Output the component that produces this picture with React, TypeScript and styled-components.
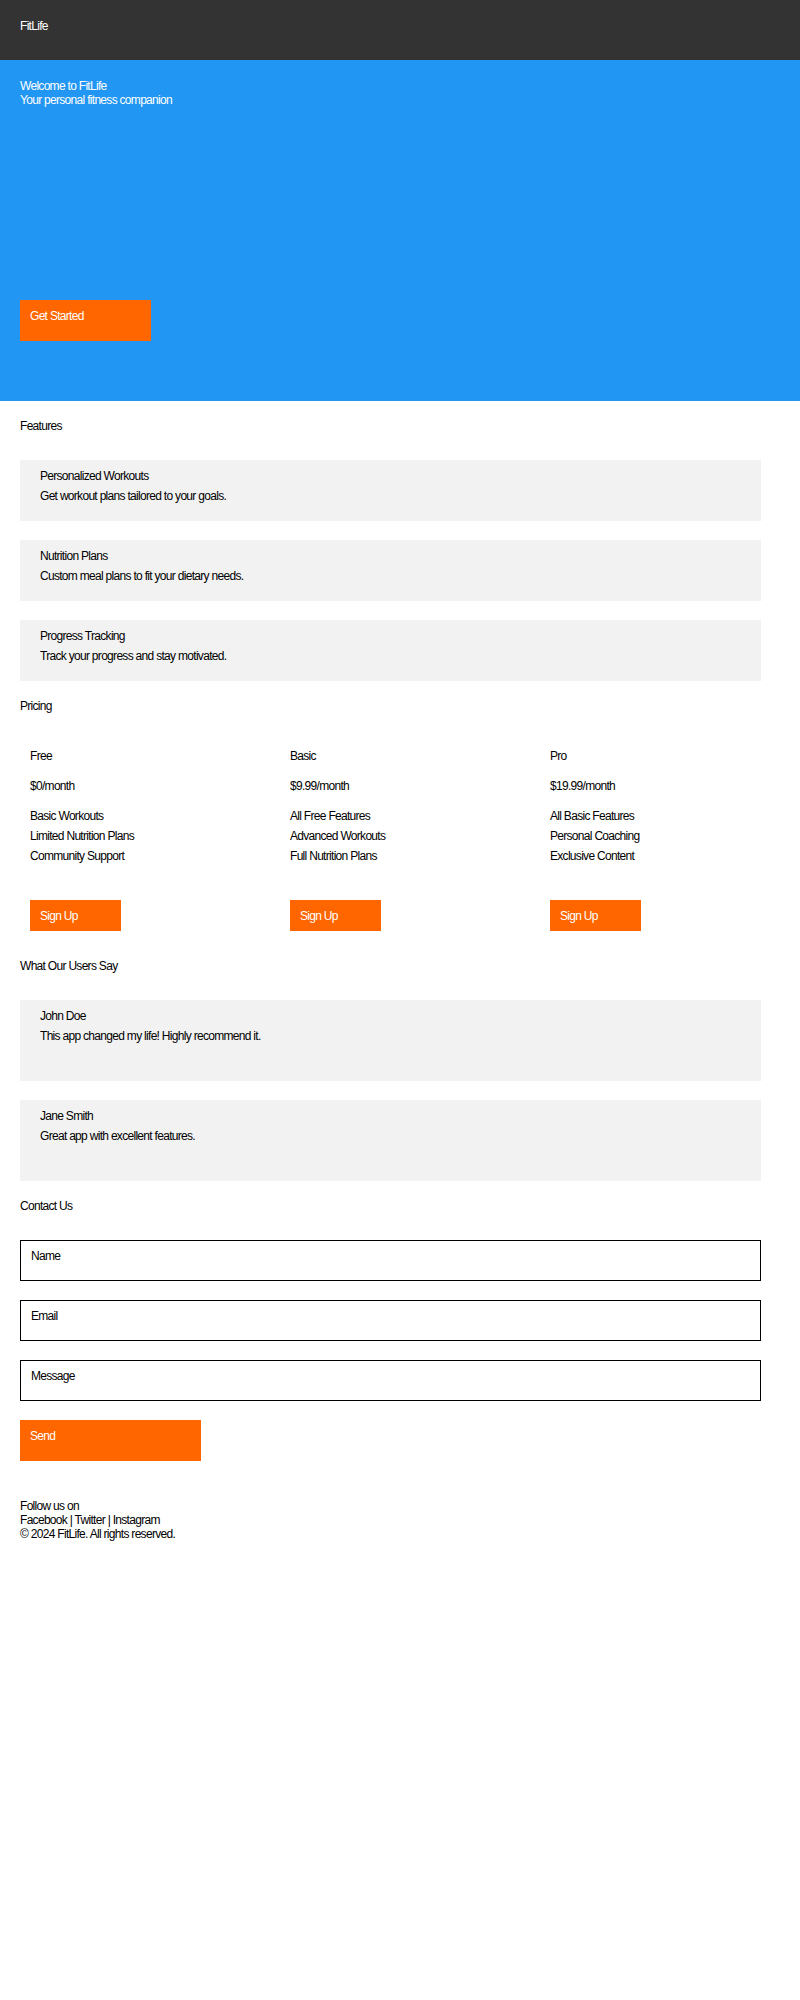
import React from 'react';
import styled, { createGlobalStyle } from 'styled-components';

const GlobalStyle = createGlobalStyle`
  body {
    margin: 0;
    background: #ffffff;
    color: #000000;
    font-family: "Liberation Sans", Arial, sans-serif;
    font-size: 12px;
    letter-spacing: -0.7px;
  }
`;

const ORANGE = '#ff6600';

const Header = styled.header`
  height: 60px;
  box-sizing: border-box;
  padding: 19px 20px 0;
  background: #333333;
  color: #ffffff;
  line-height: 14px;
`;

const Hero = styled.section`
  display: flex;
  flex-direction: column;
  align-items: flex-start;
  padding: 19px 20px 60px;
  background: #2196f3;
  color: #ffffff;
  line-height: 14px;
`;

const HeroTitle = styled.h1`
  margin: 0;
  font-size: 12px;
  font-weight: normal;
`;

const HeroText = styled.p`
  margin: 0 0 193px;
`;

// text sits at the top-left; height comes from the bottom padding
const Button = styled.button<{ $w: number; $pb: number }>`
  display: block;
  width: ${(p) => p.$w}px;
  box-sizing: border-box;
  margin: 0;
  padding: 6px 10px ${(p) => p.$pb}px;
  border: none;
  border-radius: 0;
  background: ${ORANGE};
  color: #ffffff;
  font: inherit;
  letter-spacing: inherit;
  line-height: 20px;
  text-align: left;
`;

const Section = styled.section`
  padding: 15px 20px 0;
`;

const SectionTitle = styled.h2`
  margin: 0 0 24px;
  font-size: 12px;
  font-weight: normal;
  line-height: 20px;
`;

const Stack = styled.div`
  display: flex;
  flex-direction: column;
  gap: 19px;
`;

const Card = styled.div<{ $bottom: number }>`
  width: 741px;
  box-sizing: border-box;
  padding: 6px 20px ${(p) => p.$bottom}px;
  background: #f2f2f2;
  line-height: 20px;
`;

const CardTitle = styled.h3`
  margin: 0;
  font-size: 12px;
  font-weight: normal;
`;

const CardText = styled.p`
  margin: 0;
`;

const PlanGrid = styled.div`
  display: grid;
  grid-template-columns: repeat(3, 240px);
  column-gap: 20px;
`;

const Plan = styled.div`
  padding: 6px 10px 10px;
  line-height: 20px;
`;

const PlanName = styled.h3`
  margin: 0;
  font-size: 12px;
  font-weight: normal;
`;

const Price = styled.p`
  margin: 10px 0 0;
`;

const PlanList = styled.ul`
  margin: 10px 0 34px;
  padding: 0;
  list-style: none;
`;

const Form = styled.form`
  display: flex;
  flex-direction: column;
  align-items: flex-start;
  gap: 19px;
`;

const Field = styled.input`
  width: 741px;
  height: 41px;
  box-sizing: border-box;
  margin: 0;
  padding: 5px 10px 15px;
  border: 1px solid #000000;
  border-radius: 0;
  background: #ffffff;
  font: inherit;
  letter-spacing: inherit;
  line-height: 19px;
  outline: none;

  &::placeholder {
    color: #000000;
    opacity: 1;
  }
`;

const Footer = styled.footer`
  padding: 38px 20px 20px;
  line-height: 14px;
`;

const FooterLine = styled.p`
  margin: 0;
`;

const features = [
  ['Personalized Workouts', 'Get workout plans tailored to your goals.'],
  ['Nutrition Plans', 'Custom meal plans to fit your dietary needs.'],
  ['Progress Tracking', 'Track your progress and stay motivated.'],
];

const plans = [
  { name: 'Free', price: '$0/month', items: ['Basic Workouts', 'Limited Nutrition Plans', 'Community Support'] },
  { name: 'Basic', price: '$9.99/month', items: ['All Free Features', 'Advanced Workouts', 'Full Nutrition Plans'] },
  { name: 'Pro', price: '$19.99/month', items: ['All Basic Features', 'Personal Coaching', 'Exclusive Content'] },
];

const reviews = [
  ['John Doe', 'This app changed my life! Highly recommend it.'],
  ['Jane Smith', 'Great app with excellent features.'],
];

const App = () => {
  return (
    <>
      <GlobalStyle />
      <Header>FitLife</Header>

      <Hero>
        <HeroTitle>Welcome to FitLife</HeroTitle>
        <HeroText>Your personal fitness companion</HeroText>
        <Button $w={131} $pb={15}>Get Started</Button>
      </Hero>

      <Section>
        <SectionTitle>Features</SectionTitle>
        <Stack>
          {features.map(([title, text]) => (
            <Card key={title} $bottom={15}>
              <CardTitle>{title}</CardTitle>
              <CardText>{text}</CardText>
            </Card>
          ))}
        </Stack>
      </Section>

      <Section>
        <SectionTitle>Pricing</SectionTitle>
        <PlanGrid>
          {plans.map((plan) => (
            <Plan key={plan.name}>
              <PlanName>{plan.name}</PlanName>
              <Price>{plan.price}</Price>
              <PlanList>
                {plan.items.map((item) => (
                  <li key={item}>{item}</li>
                ))}
              </PlanList>
              <Button $w={91} $pb={5}>Sign Up</Button>
            </Plan>
          ))}
        </PlanGrid>
      </Section>

      <Section>
        <SectionTitle>What Our Users Say</SectionTitle>
        <Stack>
          {reviews.map(([name, text]) => (
            <Card key={name} $bottom={35}>
              <CardTitle>{name}</CardTitle>
              <CardText>{text}</CardText>
            </Card>
          ))}
        </Stack>
      </Section>

      <Section>
        <SectionTitle>Contact Us</SectionTitle>
        <Form onSubmit={(e) => e.preventDefault()}>
          <Field placeholder="Name" />
          <Field placeholder="Email" />
          <Field placeholder="Message" />
          <Button $w={181} $pb={15}>Send</Button>
        </Form>
      </Section>

      <Footer>
        <FooterLine>Follow us on</FooterLine>
        <FooterLine>Facebook | Twitter | Instagram</FooterLine>
        <FooterLine>© 2024 FitLife. All rights reserved.</FooterLine>
      </Footer>
    </>
  );
};

export default App;
